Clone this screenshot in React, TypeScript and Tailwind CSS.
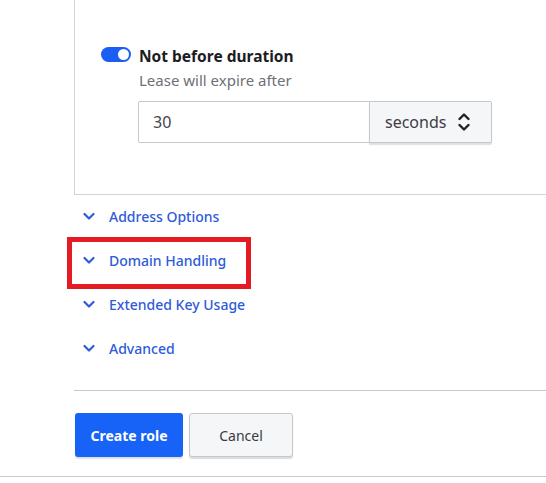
import { useState } from "react";

const sections = ["Address Options", "Domain Handling", "Extended Key Usage", "Advanced"];

const Chevron = () => (
  <svg width="14" height="14" viewBox="0 0 14 14" fill="none" className="shrink-0">
    <path d="M2.5 5l4.5 4.5L11.5 5" stroke="#2e5bd8" strokeWidth="2.2" strokeLinecap="round" strokeLinejoin="round" />
  </svg>
);

const UpDown = () => (
  <svg width="14" height="22" viewBox="0 0 14 22" fill="none">
    <path d="M2.5 8l4.5-4.5L11.5 8" stroke="#222" strokeWidth="2.4" strokeLinecap="round" strokeLinejoin="round" />
    <path d="M2.5 14l4.5 4.5L11.5 14" stroke="#222" strokeWidth="2.4" strokeLinecap="round" strokeLinejoin="round" />
  </svg>
);

export default function App() {
  const [on, setOn] = useState(true);

  return (
    <div className="w-[546px] h-[483px] bg-white overflow-hidden font-['Noto_Sans',sans-serif]">
      <div className="pl-[74px]">
        {/* lease panel */}
        <div className="h-[195px] border-l border-b border-[#d4d4d8] pt-[46px] pl-[26px]">
          <div className="flex items-start">
            <button
              onClick={() => setOn(!on)}
              className="mt-[1px] w-[30px] h-[15px] rounded-full bg-[#1b5ef4] flex items-center justify-end pr-[2px]"
            >
              <span className="block w-[11px] h-[11px] rounded-full bg-white" />
            </button>
            <div className="ml-[8px]">
              <div className="text-[15.5px] leading-[20px] font-bold text-[#1c1c22]">Not before duration</div>
              <div className="mt-[4px] text-[15px] leading-[20px] text-[#6f6f78]">Lease will expire after</div>
              <div className="mt-[11px] -ml-[1px] flex">
                <div className="w-[232px] h-[42px] border border-[#c8c8d0] rounded-l-[2px] flex items-center pl-[14px] text-[16px] text-[#45454d]">
                  30
                </div>
                <div className="w-[123px] h-[42px] -ml-[1px] border border-[#c8c8d0] rounded-r-[2px] bg-[#f5f6f8] shadow-[0_2px_1px_rgba(0,0,0,0.12)] flex items-center justify-between pl-[15px] pr-[20px] text-[16px] text-[#3d3d44]">
                  seconds
                  <UpDown />
                </div>
              </div>
            </div>
          </div>
        </div>

        {/* collapsed sections */}
        <div className="-mt-[1px]">
          {sections.map((s, i) => (
            <div key={s} className="relative h-[44px] flex items-center pl-[8px] gap-[13px]">
              {i === 1 && (
                <div className="absolute left-[-7px] top-[-1px] w-[184px] h-[52px] border-[5px] border-[#e41b23]" />
              )}
              <Chevron />
              <span className="text-[14px] text-[#2e5bd8] font-medium">{s}</span>
            </div>
          ))}
        </div>

        <div className="mt-[20px] border-t border-[#c8c8d0]" />

        <div className="pt-[22px] pl-[1px] flex gap-[6px]">
          <button className="w-[108px] h-[44px] rounded-[3px] bg-[#1763f7] text-white text-[14px] font-bold shadow-[0_2px_1px_rgba(0,0,0,0.12)]">
            Create role
          </button>
          <button className="w-[104px] h-[44px] rounded-[3px] bg-[#f5f6f8] border border-[#c6c6cc] text-[#3a3a40] text-[14px] shadow-[0_2px_1px_rgba(0,0,0,0.14)]">
            Cancel
          </button>
        </div>
      </div>
      <div className="mt-[19px] border-t border-[#c8c8d0]" />
    </div>
  );
}
